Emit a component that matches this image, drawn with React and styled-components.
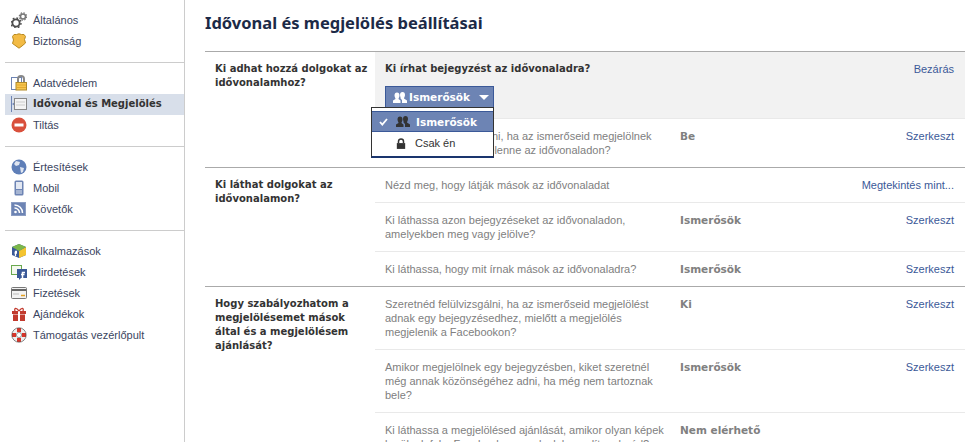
import React from "react";
import styled, { createGlobalStyle } from "styled-components";

const Global = createGlobalStyle`
  html, body { margin: 0; padding: 0; background: #fff; }
  body { width: 976px; height: 442px; overflow: hidden; font-family: "Liberation Sans", Arial, sans-serif; font-size: 11px; color: #333; }
`;
const bold = `font-family: "DejaVu Sans", sans-serif; font-weight: 700; font-size: 10.5px;`;
const Page = styled.div`display: flex; width: 976px; height: 442px; overflow: hidden;`;
const Side = styled.nav`width: 179px; margin-left: 5px; border-right: 1px solid #ccc; padding-top: 10px; flex: none;`;
const Group = styled.div`padding-bottom: 10px; margin-bottom: 10px; border-bottom: ${p => (p.$last ? "none" : "1px solid #ccc")};`;
const Item = styled.div`display: flex; align-items: center; box-sizing: border-box; height: 21px; padding: 0 0 2px 6px; gap: 6px; background: ${p => (p.$active ? "#d8dfea" : "transparent")}; color: ${p => (p.$active ? "#333" : "#3a4560")}; ${p => (p.$active ? bold + " font-size: 10px;" : "")}`;
const Main = styled.main`flex: 1; padding: 0 11px 0 20px; min-width: 0;`;
const Title = styled.h1`margin: 0; height: 51px; padding-top: 13px; box-sizing: border-box; font-family: "Noto Sans", sans-serif; font-size: 16.5px; line-height: 20px; color: #1c2a47; font-weight: 700;`;
const Section = styled.section`display: flex; border-top: 1px solid #aaa; position: relative;`;
const Head = styled.h2`margin: 0; width: 170px; flex: none; box-sizing: border-box; padding: 10px 0 0 10px; line-height: 14px; color: #333; ${bold} font-size: 10px;`;
const Rows = styled.div`flex: 1;`;
const Row = styled.div`display: flex; border-top: ${p => (p.$first ? "none" : "1px solid #e9e9e9")}; height: ${p => p.$h}px; box-sizing: border-box; padding: 10px 11px 0 10px; line-height: 14px; overflow: hidden;`;
const Label = styled.div`width: ${p => p.$w || 295}px; color: #808080; flex: none; white-space: nowrap;`;
const Val = styled.div`width: 120px; color: #808080; flex: none; ${bold}`;
const Edit = styled.div`margin-left: auto; color: #3b5998;`;
const Open = styled.div`background: #f2f2f2; height: 66px; box-sizing: border-box; padding: 10px 11px 0 10px; display: flex; flex-direction: column; align-items: flex-start;`;
const OpenHead = styled.div`display: flex; width: 100%; justify-content: space-between; line-height: 14px; color: #333; ${bold} font-size: 10px;`;
const Close = styled.span`color: #3b5998; font-family: "Liberation Sans", sans-serif; font-weight: 400; font-size: 11px;`;
const Btn = styled.div`margin-top: 10px; height: 21px; width: 109px; box-sizing: border-box; background: #6d84b4; border: 1px solid #3b5998; border-bottom: 0; color: #fff; ${bold} display: flex; align-items: center; padding-left: 7px; gap: 2px;`;
const Caret = styled.i`margin-left: 7px; border: 5px solid transparent; border-top: 5px solid #fff; border-bottom: 0;`;
const Menu = styled.div`position: absolute; left: 166px; top: 55px; width: 123px; height: 51px; background: #fff; border: 1px solid #333; border-bottom: 2px solid #1a356e; z-index: 2; box-sizing: border-box; padding-top: 3px;`;
const MenuItem = styled.div`height: ${p => (p.$on ? 21 : 22)}px; display: flex; align-items: center; background: ${p => (p.$on ? "#6d84b4" : "#fff")}; color: ${p => (p.$on ? "#fff" : "#333")}; border-top: ${p => (p.$on ? "1px solid #3b5998" : "0")}; border-bottom: ${p => (p.$on ? "1px solid #3b5998" : "0")}; box-sizing: border-box; padding-left: 7px; ${p => (p.$on ? bold : "")}`;
const Check = styled.span`width: 17px; display: flex; align-items: center;`;
const MenuText = styled.span`margin-left: 6px;`;
const MenuTextPlain = styled.span`margin-left: 9px;`;
const Ico = styled.svg`width: 16px; height: 16px; flex: none; display: block;`;

const I = {
  gear: <><circle cx="5" cy="11" r="3.600" fill="none" stroke="#4d4d4d" strokeWidth="1.800"/><circle cx="5" cy="11" r="5" fill="none" stroke="#4d4d4d" strokeWidth="1.400" strokeDasharray="1.800 2.100"/><circle cx="12" cy="4.500" r="2.500" fill="none" stroke="#777" strokeWidth="1.500"/><circle cx="12" cy="4.500" r="3.700" fill="none" stroke="#777" strokeWidth="1.200" strokeDasharray="1.500 1.400"/></>,
  badge: <path d="M3 1.500h2.500L8 .8l2.500.7H13l1.500 2-1 3 1 3.500L11 13l-3 2.200L5 13l-3.500-2.500 1-3.500-1-3.500z" fill="#f3bb45" stroke="#b98a20"/>,
  lock: <><rect x=".5" y="2.500" width="10" height="12" fill="#fff" stroke="#6d84b4"/><path d="M7 7V4a3 3 0 016 0v3" fill="none" stroke="#888" strokeWidth="2"/><rect x="5" y="7.500" width="10.500" height="7.500" fill="#f5c550" stroke="#b08a2a"/><path d="M6 10h9M6 12.500h9" stroke="#e3a92f"/></>,
  time: <><path d="M.5 0v16" stroke="#6d84b4"/><path d="M1 8l3-2v4z" fill="#6d84b4"/><rect x="3.500" y="2.500" width="12" height="11" fill="#f4f4f4" stroke="#888"/><path d="M5 6h9M5 9h9" stroke="#ccc"/></>,
  block: <><circle cx="8" cy="8" r="7.500" fill="#d9503c"/><rect x="3.500" y="6.500" width="9" height="3" fill="#fff"/></>,
  globe: <><circle cx="8" cy="8" r="7.500" fill="#5f7fb8"/><path d="M5 2l4 1-1 3-3 1-2-2zM9 8l4 1-1 4-2 1z" fill="#dfe5f0"/></>,
  phone: <><rect x="3.500" y=".5" width="9" height="15" rx="1.500" fill="#6d84b4"/><rect x="5" y="2" width="6" height="7" fill="#e3e8f2"/><path d="M5 11h6M5 13h6" stroke="#dfe5f0"/></>,
  rss: <><rect x=".5" y="1.500" width="14" height="13" fill="#6d84b4" stroke="#8b9dc3"/><circle cx="4.500" cy="11" r="1.300" fill="#fff"/><path d="M3.500 7a5 5 0 015 5M3.500 4a8 8 0 018 8" fill="none" stroke="#fff" strokeWidth="1.500"/></>,
  apps: <><path d="M8 1l7 3v8l-7 3-7-3V4z" fill="#3b5998"/><path d="M8 8l7-4v8l-7 3z" fill="#f4c430"/><path d="M1 4l7-3 7 3-7 4z" fill="#7cb84a"/><path d="M4.500 13V8.500h1.500M3.500 10h2.500" fill="none" stroke="#fff" strokeWidth="1.300"/></>,
  ads: <><rect x=".5" y="1.500" width="10" height="9" fill="#f4f8ee" stroke="#6aa84f"/><rect x="6" y="5" width="10" height="9" fill="#3b5998"/><path d="M8 14v2l2-2z" fill="#3b5998"/><path d="M11.500 14V8.500h2.500M10 10.500h3.500" fill="none" stroke="#fff" strokeWidth="1.500"/></>,
  card: <><rect x=".5" y="2.500" width="15" height="11" rx="1" fill="#f2f2f2" stroke="#777"/><rect x="1" y="4" width="14" height="2" fill="#666"/><path d="M2 9h6" stroke="#bbb"/><path d="M10 10.500h4" stroke="#e4a020" strokeWidth="1.500"/></>,
  gift: <><rect x="1" y="5" width="14" height="3" fill="#c23a2e"/><rect x="2" y="8.500" width="12" height="6.500" fill="#c23a2e"/><rect x="7" y="5" width="2" height="10" fill="#fff"/><path d="M8 5C5 1 3 2 4 5M8 5c3-4 5-3 4 0" fill="none" stroke="#c23a2e" strokeWidth="1.300"/></>,
  help: <><circle cx="8" cy="8" r="5" fill="none" stroke="#eee" strokeWidth="4"/><path d="M8 1v4M8 11v4M1 8h4M11 8h4" stroke="#d8352a" strokeWidth="4"/><circle cx="8" cy="8" r="2.600" fill="#fff" stroke="#555" strokeWidth=".6"/><circle cx="8" cy="8" r="7.200" fill="none" stroke="#555" strokeWidth=".7"/></>,
};
const Icon = ({ n }) => <Ico viewBox="0 0 16 16">{I[n]}</Ico>;
const People = ({ c }) => <svg width="14" height="13" viewBox="0 0 14 13"><path d="M4 1.500a2.500 3 0 012.500 3c0 1.500-1 2.500-1 3.500l2 1.500V12H0V9.500L2.500 8c0-1-1-2-1-3.500A2.500 3 0 014 1.500zM9.500 1a2.500 3 0 012.500 3c0 1.500-1 2.500-1 3.500l3 2V12H9V9L7.500 7.500C8 7 7 5.500 7 4a2.500 3 0 012.500-3z" fill={c}/></svg>;
const Lock = () => <svg width="10" height="11" viewBox="0 0 12 13"><path d="M3 6V4a3 3 0 016 0v2" fill="none" stroke="#333" strokeWidth="1.800"/><rect x="1" y="6" width="10" height="7" fill="#333"/></svg>;
const Tick = () => <svg width="9" height="8" viewBox="0 0 9 8"><path d="M1 4l2.300 2.600L8 1" fill="none" stroke="#fff" strokeWidth="1.800"/></svg>;

const groups = [
  [["gear", "Általános"], ["badge", "Biztonság"]],
  [["lock", "Adatvédelem"], ["time", "Idővonal és Megjelölés", true], ["block", "Tiltás"]],
  [["globe", "Értesítések"], ["phone", "Mobil"], ["rss", "Követők"]],
  [["apps", "Alkalmazások"], ["ads", "Hirdetések"], ["card", "Fizetések"], ["gift", "Ajándékok"], ["help", "Támogatás vezérlőpult"]],
];

export default function App() {
  return (
    <Page>
      <Global />
      <Side>
        {groups.map((g, i) => (
          <Group key={i} $last={i === 3}>
            {g.map(([n, t, a]) => <Item key={t} $active={a}><Icon n={n} />{t}</Item>)}
          </Group>
        ))}
      </Side>
      <Main>
        <Title>Idővonal és megjelölés beállításai</Title>
        <Section>
          <Head>Ki adhat hozzá dolgokat az<br />idővonalamhoz?</Head>
          <Rows>
            <Open>
              <OpenHead>Ki írhat bejegyzést az idővonaladra?<Close>Bezárás</Close></OpenHead>
              <Btn><People c="#fff" />Ismerősök<Caret /></Btn>
            </Open>
            <Row $h={49}><Label>Szeretnéd felülvizsgálni, ha az ismerőseid megjelölnek<br />valamin, mielőtt megjelenne az idővonaladon?</Label><Val>Be</Val><Edit>Szerkeszt</Edit></Row>
          </Rows>
          <Menu>
            <MenuItem $on><Check><Tick /></Check><People c="#333" /><MenuText>Ismerősök</MenuText></MenuItem>
            <MenuItem><Check /><Lock /><MenuTextPlain>Csak én</MenuTextPlain></MenuItem>
          </Menu>
        </Section>
        <Section>
          <Head>Ki láthat dolgokat az<br />idővonalamon?</Head>
          <Rows>
            <Row $h={34} $first><Label $w={415}>Nézd meg, hogy látják mások az idővonaladat</Label><Edit>Megtekintés mint...</Edit></Row>
            <Row $h={49}><Label>Ki láthassa azon bejegyzéseket az idővonaladon,<br />amelyekben meg vagy jelölve?</Label><Val>Ismerősök</Val><Edit>Szerkeszt</Edit></Row>
            <Row $h={35}><Label>Ki láthassa, hogy mit írnak mások az idővonaladra?</Label><Val>Ismerősök</Val><Edit>Szerkeszt</Edit></Row>
          </Rows>
        </Section>
        <Section>
          <Head>Hogy szabályozhatom a<br />megjelölésemet mások<br />által és a megjelölésem<br />ajánlását?</Head>
          <Rows>
            <Row $h={62} $first><Label>Szeretnéd felülvizsgálni, ha az ismerőseid megjelölést<br />adnak egy bejegyzésedhez, mielőtt a megjelölés<br />megjelenik a Facebookon?</Label><Val>Ki</Val><Edit>Szerkeszt</Edit></Row>
            <Row $h={63}><Label>Amikor megjelölnek egy bejegyzésben, kiket szeretnél<br />még annak közönségéhez adni, ha még nem tartoznak<br />bele?</Label><Val>Ismerősök</Val><Edit>Szerkeszt</Edit></Row>
            <Row $h={63}><Label>Ki láthassa a megjelölésed ajánlását, amikor olyan képek<br />kerülnek fel a Facebookra, amelyek hasonlítanak rád?</Label><Val>Nem elérhető</Val></Row>
          </Rows>
        </Section>
      </Main>
    </Page>
  );
}
